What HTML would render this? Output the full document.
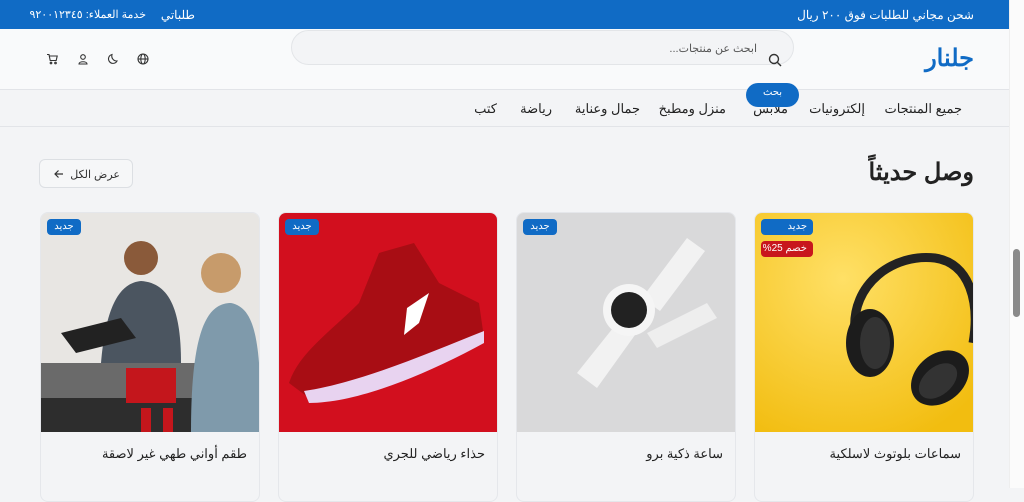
<!DOCTYPE html>
<html lang="ar" dir="rtl"><head><meta charset="utf-8">
<style>
*{margin:0;padding:0;box-sizing:border-box}
body{width:1024px;height:488px;overflow:hidden;background:#f3f4f6;font-family:"Liberation Sans","Noto Sans CJK SC",sans-serif;position:relative;color:#1f2937}
.a{position:absolute;white-space:nowrap}
.top{left:0;top:0;width:1010px;height:29px;background:#106bc5;color:#fff;font-size:12px}
.hdr{left:0;top:29px;width:1010px;height:60px;background:#f9fafb}
.nav{left:0;top:89px;width:1010px;height:38px;background:#f3f4f6;border-top:1px solid #e2e4e8;border-bottom:1px solid #e2e4e8;font-size:13px;color:#222}
.search{left:291px;top:30px;width:503px;height:35px;border:1px solid #e3e5e8;border-radius:18px;background:#f3f4f6}
.card{top:212px;width:220px;height:290px;border:1px solid #e5e7eb;border-radius:8px;overflow:hidden;background:#f3f4f6}
.img{position:absolute;left:0;top:0;width:220px;height:219px}
.ttl{position:absolute;right:12px;top:233px;font-size:13px;color:#222}
.badge{position:absolute;font-size:10px;color:#fff;border-radius:4px;height:16px;line-height:16px;padding:0 6px;white-space:nowrap}
.sb{left:1009px;top:0;width:15px;height:488px;background:#fbfbfb;border-left:1px solid #eee}
</style></head><body>
<div class="a top">
 <span class="a" style="right:36px;top:8px">شحن مجاني للطلبات فوق ٢٠٠ ريال</span>
 <div class="a" style="left:150px;width:45px;top:8px;text-align:right">طلباتي</div>
 <div class="a" style="left:30px;width:116px;top:8px;text-align:right;font-size:11px">خدمة العملاء: ٩٢٠٠١٢٣٤٥</div>
</div>
<div class="a hdr"></div>
<div class="a search"><span class="a" style="right:36px;top:11px;font-size:11px;color:#555">ابحث عن منتجات...</span>
<svg class="a" style="left:476px;top:22px" width="14" height="14" viewBox="0 0 14 14" fill="none" stroke="#333" stroke-width="1.4"><circle cx="6" cy="6" r="4.5"/><path d="M9.5 9.5L13 13"/></svg></div>
<div class="a" style="right:50px;top:44px;font-size:24px;font-weight:bold;color:#106bc5">جلنار</div>
<svg class="a" style="left:137px;top:53px" width="12" height="12" viewBox="0 0 12 12" fill="none" stroke="#333" stroke-width="1.1"><circle cx="6" cy="6" r="5"/><ellipse cx="6" cy="6" rx="2.2" ry="5"/><path d="M1 6h10"/></svg>
<svg class="a" style="left:107px;top:53px" width="12" height="12" viewBox="0 0 12 12" fill="none" stroke="#333" stroke-width="1.1"><path d="M10 8A5 5 0 0 1 5 1.5 4.5 4.5 0 1 0 10 8z"/></svg>
<svg class="a" style="left:77px;top:53px" width="12" height="12" viewBox="0 0 12 12" fill="none" stroke="#333" stroke-width="1.1"><circle cx="6" cy="4" r="2.3"/><path d="M2 11c0-3 8-3 8 0z"/></svg>
<svg class="a" style="left:46px;top:53px" width="12" height="12" viewBox="0 0 12 12" fill="none" stroke="#333" stroke-width="1.1"><path d="M1 1.5h2l1.2 6h6l1-4.5H3.5"/><circle cx="5" cy="10" r=".8"/><circle cx="9.5" cy="10" r=".8"/></svg>
<div class="a nav">
 <span class="a" style="right:48px;top:11px">جميع المنتجات</span>
 <span class="a" style="right:145px;top:11px">إلكترونيات</span>
 <span class="a" style="right:222px;top:11px">ملابس</span>
 <span class="a" style="right:284px;top:11px">منزل ومطبخ</span>
 <span class="a" style="right:370px;top:11px">جمال وعناية</span>
 <span class="a" style="right:458px;top:11px">رياضة</span>
 <span class="a" style="right:513px;top:11px">كتب</span>
</div>
<div class="a" style="left:746px;top:83px;width:53px;height:24px;border-radius:12px;background:#106bc5;color:#fff;font-size:10px;text-align:center;line-height:20px">بحث</div>
<div class="a" style="right:50px;top:158px;font-size:24px;font-weight:bold;color:#222">وصل حديثاً</div>
<div class="a" style="left:39px;top:159px;width:94px;height:29px;border:1px solid #dcdfe3;border-radius:6px;background:#f6f7f8;font-size:11px;color:#333">
 <span class="a" style="right:12px;top:8px">عرض الكل</span>
 <svg class="a" style="left:14px;top:9px" width="10" height="10" viewBox="0 0 10 10" fill="none" stroke="#333" stroke-width="1.2"><path d="M9 5H1M4.5 1.5L1 5l3.5 3.5"/></svg>
</div>

<div class="a card" style="left:754px">
 <svg class="img" viewBox="0 0 220 219"><radialGradient id="g1" cx=".4" cy=".3" r=".8"><stop offset="0" stop-color="#ffe066"/><stop offset="1" stop-color="#f2bd10"/></radialGradient><rect width="220" height="219" fill="url(#g1)"/>
 <path d="M100 120C95 70 140 40 180 45C215 50 225 90 218 130" fill="none" stroke="#222" stroke-width="9"/>
 <ellipse cx="115" cy="130" rx="24" ry="34" fill="#1c1c1c"/><ellipse cx="120" cy="130" rx="15" ry="26" fill="#333"/>
 <ellipse cx="185" cy="165" rx="32" ry="24" transform="rotate(-40 185 165)" fill="#1c1c1c"/><ellipse cx="183" cy="168" rx="22" ry="14" transform="rotate(-40 183 168)" fill="#333"/></svg>
 <div class="badge" style="top:6px;left:6px;width:52px;background:#106bc5;text-align:right">جديد</div>
 <div class="badge" style="top:28px;left:6px;width:52px;background:#c8161d;text-align:right">خصم 25%</div>
 <div class="ttl">سماعات بلوتوث لاسلكية</div>
</div>
<div class="a card" style="left:516px">
 <svg class="img" viewBox="0 0 220 219"><rect width="220" height="219" fill="#d9d9da"/>
 <path d="M60 160L100 110 118 122 80 175Z" fill="#f2f2f2"/><path d="M125 85L170 25 188 38 143 98Z" fill="#f2f2f2"/>
 <path d="M130 120L190 90 200 105 140 135Z" fill="#eee"/>
 <circle cx="112" cy="97" r="26" fill="#f5f5f5"/><circle cx="112" cy="97" r="18" fill="#222"/></svg>
 <div class="badge" style="top:6px;left:6px;width:34px;background:#106bc5;text-align:center">جديد</div>
 <div class="ttl">ساعة ذكية برو</div>
</div>
<div class="a card" style="left:278px">
 <svg class="img" viewBox="0 0 220 219"><rect width="220" height="219" fill="#d20f1e"/>
 <path d="M10 170C20 140 50 120 80 90L100 40 135 30 160 70 200 90 205 125C160 150 90 185 30 185Z" fill="#a80d14"/>
 <path d="M25 178C80 170 150 140 205 118L205 130C150 160 80 190 30 190Z" fill="#e8d3f0"/>
 <path d="M128 95L150 80 140 110 125 122Z" fill="#fff"/></svg>
 <div class="badge" style="top:6px;left:6px;width:34px;background:#106bc5;text-align:center">جديد</div>
 <div class="ttl">حذاء رياضي للجري</div>
</div>
<div class="a card" style="left:40px">
 <svg class="img" viewBox="0 0 220 219"><rect width="220" height="219" fill="#e8e6e3"/>
 <rect y="150" width="220" height="69" fill="#6a6a6a"/><rect y="185" width="220" height="34" fill="#2d2d2d"/>
 <circle cx="100" cy="45" r="17" fill="#8a5a3a"/><path d="M60 150C65 90 80 70 100 68 130 70 140 100 140 150Z" fill="#4b5560"/>
 <circle cx="180" cy="60" r="20" fill="#c79b6b"/><path d="M150 219C150 120 165 90 190 90 215 95 220 130 220 219Z" fill="#7f9aab"/>
 <rect x="85" y="155" width="50" height="35" fill="#c4161c"/><rect x="100" y="195" width="10" height="24" fill="#c4161c"/><rect x="122" y="195" width="10" height="24" fill="#c4161c"/>
 <path d="M20 120L80 105 95 125 35 140Z" fill="#222"/></svg>
 <div class="badge" style="top:6px;left:6px;width:34px;background:#106bc5;text-align:center">جديد</div>
 <div class="ttl">طقم أواني طهي غير لاصقة</div>
</div>

<div class="a sb"><div class="a" style="left:3px;top:249px;width:7px;height:68px;border-radius:4px;background:#8a8a8a"></div></div>
</body></html>
